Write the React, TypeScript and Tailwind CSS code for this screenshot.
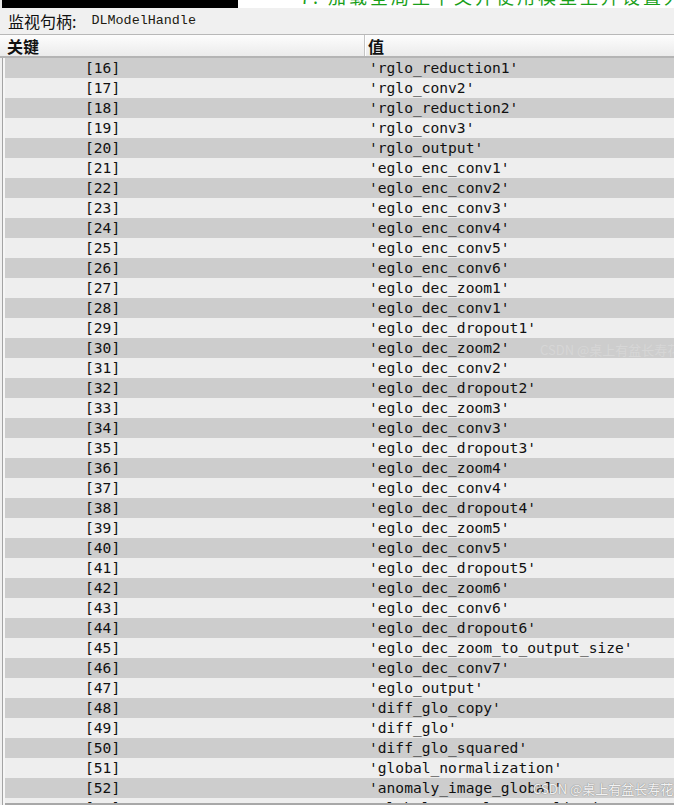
import React from "react";

const rows: [number, string][] = [
  [16, "rglo_reduction1"],
  [17, "rglo_conv2"],
  [18, "rglo_reduction2"],
  [19, "rglo_conv3"],
  [20, "rglo_output"],
  [21, "eglo_enc_conv1"],
  [22, "eglo_enc_conv2"],
  [23, "eglo_enc_conv3"],
  [24, "eglo_enc_conv4"],
  [25, "eglo_enc_conv5"],
  [26, "eglo_enc_conv6"],
  [27, "eglo_dec_zoom1"],
  [28, "eglo_dec_conv1"],
  [29, "eglo_dec_dropout1"],
  [30, "eglo_dec_zoom2"],
  [31, "eglo_dec_conv2"],
  [32, "eglo_dec_dropout2"],
  [33, "eglo_dec_zoom3"],
  [34, "eglo_dec_conv3"],
  [35, "eglo_dec_dropout3"],
  [36, "eglo_dec_zoom4"],
  [37, "eglo_dec_conv4"],
  [38, "eglo_dec_dropout4"],
  [39, "eglo_dec_zoom5"],
  [40, "eglo_dec_conv5"],
  [41, "eglo_dec_dropout5"],
  [42, "eglo_dec_zoom6"],
  [43, "eglo_dec_conv6"],
  [44, "eglo_dec_dropout6"],
  [45, "eglo_dec_zoom_to_output_size"],
  [46, "eglo_dec_conv7"],
  [47, "eglo_output"],
  [48, "diff_glo_copy"],
  [49, "diff_glo"],
  [50, "diff_glo_squared"],
  [51, "global_normalization"],
  [52, "anomaly_image_global"],
  [53, "global_anomaly_normalized"],
];

const mono = { fontFamily: "'DejaVu Sans Mono', monospace" };

export default function App() {
  return (
    <div
      className="relative w-[674px] h-[805px] overflow-hidden bg-[#f0f0f0] flex flex-col text-[#111]"
      style={{ fontFamily: "'Noto Sans CJK SC', sans-serif" }}
    >
      {/* clipped strip of the window behind */}
      <div className="h-[8px] shrink-0 flex overflow-hidden">
        <div className="w-[2px] bg-[#e8e8e8]" />
        <div className="w-[236px] bg-black" />
        <div className="flex-1 bg-white relative overflow-hidden">
          <div className="absolute left-[62px] -top-[13px] text-[18px] leading-[18px] text-[#1aa01a] whitespace-nowrap tracking-[3px]">
            7. 加载全局生下文并使用模型上升设置大
          </div>
        </div>
      </div>

      {/* title */}
      <div className="h-[26px] shrink-0 flex items-center pl-[8px] text-[16px] leading-none">
        <span>监视句柄:</span>
        <span className="ml-[15px] text-[13.4px] text-[#201a10]" style={{ fontFamily: "'Liberation Mono', monospace" }}>
          DLModelHandle
        </span>
      </div>

      {/* header */}
      <div className="h-[24px] shrink-0 flex border-t border-[#b8b8b8] border-b-2 border-b-[#b4b4b4] bg-gradient-to-b from-[#fdfdfd] to-[#ebebeb]">
        <div className="w-[364px] flex items-center pl-[7px] font-bold text-[16px] leading-none">关键</div>
        <div className="w-[1px] bg-[#c4c4c4]" />
        <div className="w-[1px] bg-white" />
        <div className="flex-1 flex items-center pl-[2px] font-bold text-[16px] leading-none">值</div>
      </div>

      {/* rows */}
      <div className="flex-1 min-h-0 flex">
        <div className="w-[2px] bg-[#f0f0f0]" />
        <div className="w-[1px] bg-[#a4a4a4]" />
        <div className="w-[2px] bg-[#f6f6f6]" />
        <div className="flex-1 flex flex-col overflow-hidden border-b-2 border-[#a8a8a8]">
          {rows.map(([k, v], i) => (
            <div
              key={k}
              className={`h-[20px] shrink-0 flex items-center text-[14.6px] leading-none ${i % 2 === 0 ? "bg-[#cdcdcd]" : "bg-[#eeeeee]"}`}
              style={mono}
            >
              <div className="w-[359px] pl-[80px] whitespace-nowrap">[{k}]</div>
              <div className="flex-1 pl-[5px] whitespace-nowrap">'{v}'</div>
            </div>
          ))}
        </div>
      </div>

      {/* watermarks */}
      <div className="absolute left-[540px] top-[340px] text-[13px] text-white/20 whitespace-nowrap pointer-events-none">
        CSDN @桌上有盆长寿花
      </div>
      <div
        className="absolute left-[533px] top-[779px] text-[13px] text-white/90 whitespace-nowrap pointer-events-none"
        style={{ textShadow: "0 0 1px #888, 0 0 1px #888" }}
      >
        CSDN @桌上有盆长寿花
      </div>
    </div>
  );
}
